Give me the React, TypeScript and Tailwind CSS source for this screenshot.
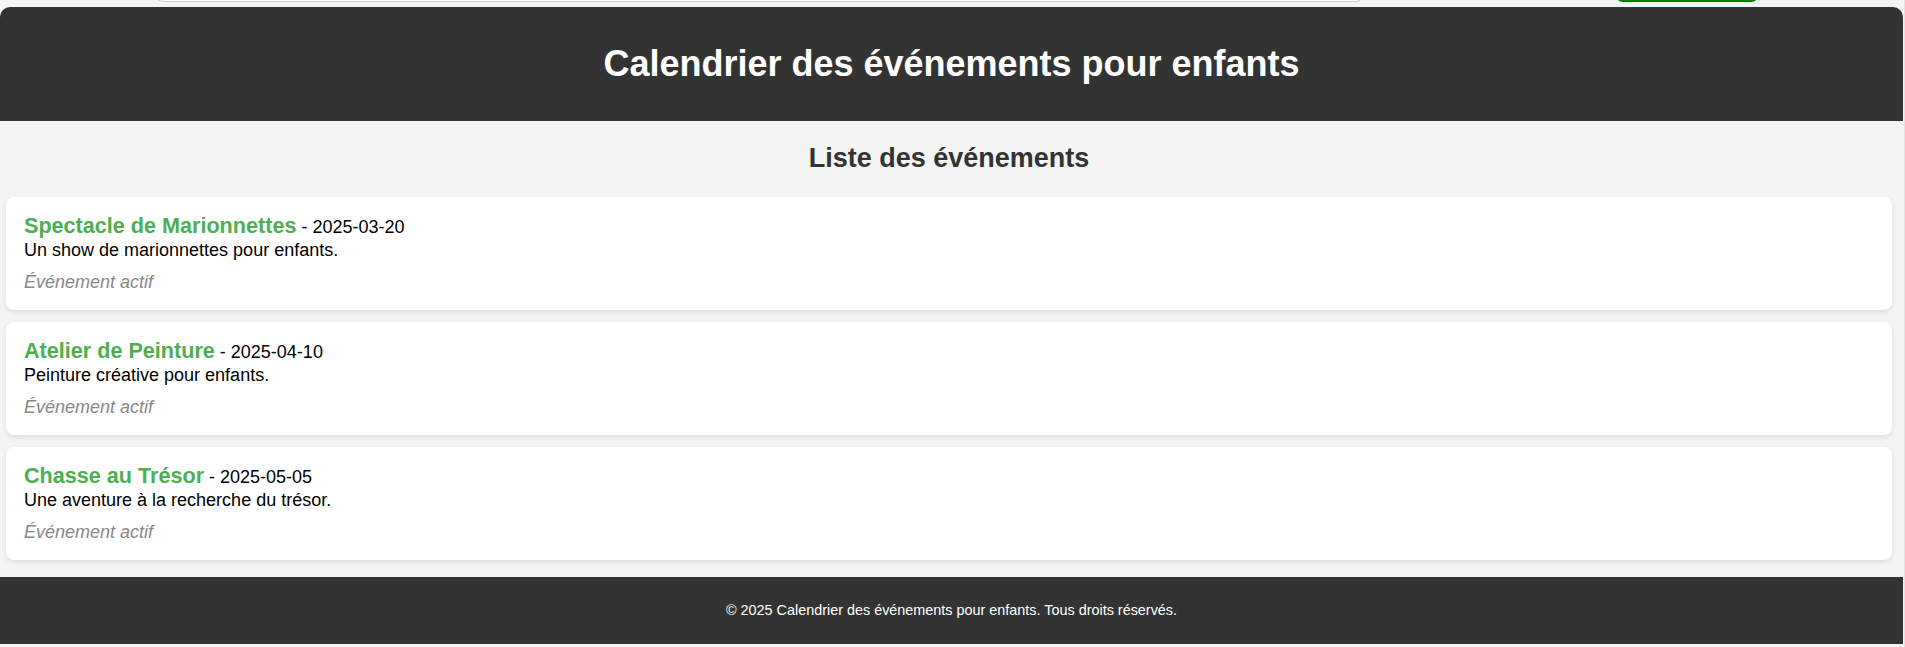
import React from "react";

export default function App() {
  const events = [
    {
      id: 1,
      title: "Spectacle de Marionnettes",
      date: "2025-03-20",
      description: "Un show de marionnettes pour enfants.",
    },
    {
      id: 2,
      title: "Atelier de Peinture",
      date: "2025-04-10",
      description: "Peinture créative pour enfants.",
    },
    {
      id: 3,
      title: "Chasse au Trésor",
      date: "2025-05-05",
      description: "Une aventure à la recherche du trésor.",
    },
  ];

  return (
    <div className="min-h-screen bg-[#f4f4f4] border-r border-[#e4e4e4] font-['Liberation_Sans',Arial,sans-serif] text-[18px] text-black">
      {/* bits of the page above, scrolled off */}
      <div className="h-[7px] overflow-hidden flex items-end pb-[5px]">
        <div className="ml-[155px] w-[1209px] h-[40px] shrink-0 rounded-[8px] border border-[#cfcfcf] bg-white"></div>
        <div className="ml-[251px] w-[144px] h-[40px] shrink-0 rounded-[8px] bg-[#008000]"></div>
      </div>

      <div className="mr-[1px]">
        <header className="h-[114px] rounded-t-[10px] bg-[#333333] flex items-center justify-center">
          <h1 className="text-[36px] font-bold text-white leading-[41px] -mt-[1px]">
            Calendrier des événements pour enfants
          </h1>
        </header>

        <main className="pt-[22px] pb-[17px] pl-[6px] pr-[11px]">
          <h2 className="text-center text-[27px] leading-[31px] font-bold text-[#333333]">
            Liste des événements
          </h2>
          <div className="mt-[23px] flex flex-col gap-[12px]">
            {events.map((ev) => (
              <div
                key={ev.id}
                className="h-[113px] rounded-[8px] bg-white px-[18px] pt-[16px] shadow-[0_2px_5px_rgba(0,0,0,0.1)]"
              >
                <div className="leading-[25px]">
                  <span className="text-[21.6px] font-bold text-[#4caf50]">{ev.title}</span>
                  <span className="text-[18px] leading-none"> - {ev.date}</span>
                </div>
                <p className="leading-[21px]">{ev.description}</p>
                <p className="mt-[11px] leading-[21px] italic text-[#888888]">Événement actif</p>
              </div>
            ))}
          </div>
        </main>

        <footer className="h-[67px] bg-[#333333] flex items-center justify-center">
          <p className="text-[14.4px] text-white">
            © 2025 Calendrier des événements pour enfants. Tous droits réservés.
          </p>
        </footer>
      </div>
    </div>
  );
}
